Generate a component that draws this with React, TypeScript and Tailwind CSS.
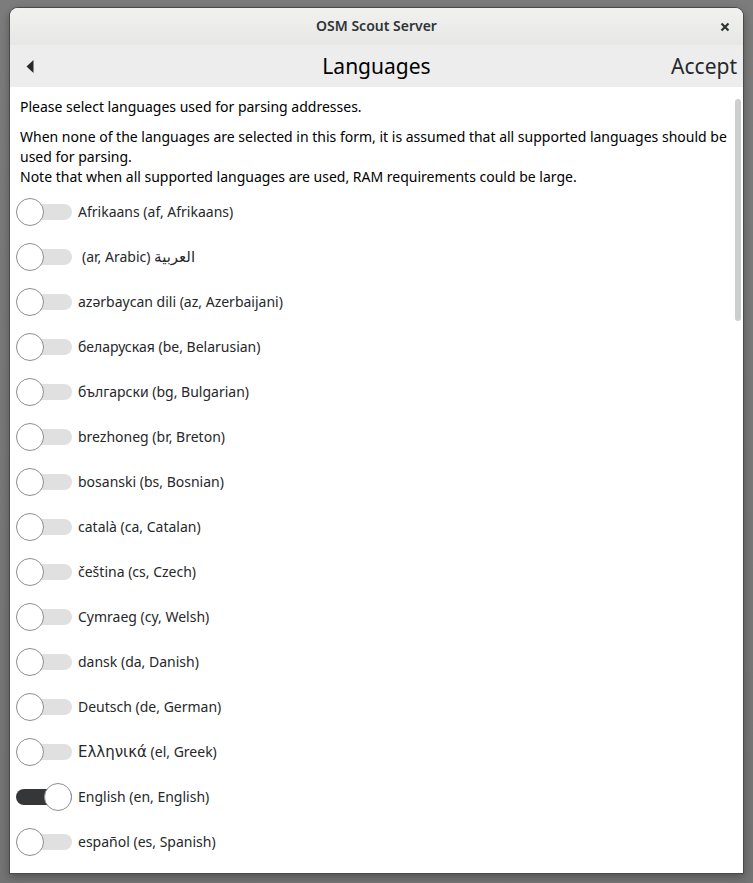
type Language = {
  code: string;
  native: string;
  english: string;
  script?: "arabic" | "greek";
  selected?: boolean;
};

const languages: Language[] = [
  { code: "af", native: "Afrikaans", english: "Afrikaans" },
  { code: "ar", native: "العربية", english: "Arabic", script: "arabic" },
  { code: "az", native: "azərbaycan dili", english: "Azerbaijani" },
  { code: "be", native: "беларуская", english: "Belarusian" },
  { code: "bg", native: "български", english: "Bulgarian" },
  { code: "br", native: "brezhoneg", english: "Breton" },
  { code: "bs", native: "bosanski", english: "Bosnian" },
  { code: "ca", native: "català", english: "Catalan" },
  { code: "cs", native: "čeština", english: "Czech" },
  { code: "cy", native: "Cymraeg", english: "Welsh" },
  { code: "da", native: "dansk", english: "Danish" },
  { code: "de", native: "Deutsch", english: "German" },
  { code: "el", native: "Ελληνικά", english: "Greek", script: "greek" },
  { code: "en", native: "English", english: "English", selected: true },
  { code: "es", native: "español", english: "Spanish" },
];

function LanguageSwitch({ language }: { language: Language }) {
  const id = `language-${language.code}`;
  return (
    <li className="flex h-7 items-center gap-1.5">
      <input
        id={id}
        type="checkbox"
        role="switch"
        defaultChecked={language.selected}
        className="grid h-7 w-14 shrink-0 appearance-none items-center before:col-start-1 before:row-start-1 before:h-4 before:w-14 before:rounded-full before:bg-[#e0e0e0] before:content-[''] after:col-start-1 after:row-start-1 after:size-7 after:rounded-full after:border after:border-[#8f8f8f] after:bg-white after:content-[''] checked:before:bg-[#353637] checked:after:justify-self-end"
      />
      <label
        htmlFor={id}
        dir={language.script === "arabic" ? "rtl" : "ltr"}
        className="text-sm leading-5 text-[#26282a] rtl:pl-1"
      >
        <span
          className={
            language.script ? "font-['DejaVu_Sans',sans-serif] text-[15px] leading-5" : ""
          }
        >
          {language.native}
        </span>
        {` (${language.code}, ${language.english})`}
      </label>
    </li>
  );
}

function TitleBar() {
  return (
    <header className="grid h-[37px] grid-cols-[1fr_auto_1fr] items-center bg-linear-to-b from-[#f1f1f0] to-[#e7e8e6] px-3">
      <h1 className="col-start-2 pb-0.5 text-sm font-semibold text-[#2e3436]">OSM Scout Server</h1>
      <button type="button" aria-label="Close" className="justify-self-end">
        <svg viewBox="0 0 12 12" className="size-3 text-[#2e3436]" aria-hidden="true">
          <path d="M2.5 2.5 9.5 9.5M9.5 2.5 2.5 9.5" stroke="currentColor" strokeWidth="2.2" />
        </svg>
      </button>
    </header>
  );
}

function PageHeader() {
  return (
    <nav className="grid h-[42px] grid-cols-[1fr_auto_1fr] items-center bg-[#ededed] px-1.5">
      <button type="button" aria-label="Back" className="justify-self-start pl-2">
        <svg viewBox="0 0 13 13" className="size-[13px] text-[#26282a]" aria-hidden="true">
          <path d="M9.5 0v13L2.5 6.5z" fill="currentColor" />
        </svg>
      </button>
      <h2 className="text-[21px] leading-7 text-black">Languages</h2>
      <button type="button" className="justify-self-end text-[21px] leading-7 text-[#26282a]">
        Accept
      </button>
    </nav>
  );
}

export default function App() {
  return (
    <div className="min-h-screen bg-linear-to-b from-[#7c7c7c] to-[#747474] px-2.5 pt-2 pb-2.5 font-['Noto_Sans','DejaVu_Sans',sans-serif]">
      <div className="relative overflow-hidden rounded-t-lg bg-white shadow-[0_0_0_1px_#4a4a4a,0_3px_9px_1px_rgba(0,0,0,0.3)]">
        <TitleBar />
        <PageHeader />
        <main className="pt-2.5 pb-[17px]">
          <div className="flex flex-col gap-2.5 pr-4 pl-2.5 text-sm leading-5 text-black">
            <p>Please select languages used for parsing addresses.</p>
            <p>
              When none of the languages are selected in this form, it is assumed that all supported
              languages should be used for parsing.
              <br />
              Note that when all supported languages are used, RAM requirements could be large.
            </p>
          </div>
          <ul className="mt-[11px] flex flex-col gap-[17px] pl-1.5">
            {languages.map((language) => (
              <LanguageSwitch key={language.code} language={language} />
            ))}
          </ul>
        </main>
        <div className="absolute top-[91px] right-0.5 h-[222px] w-1.5 rounded-full bg-[#cdcece]" />
      </div>
    </div>
  );
}
